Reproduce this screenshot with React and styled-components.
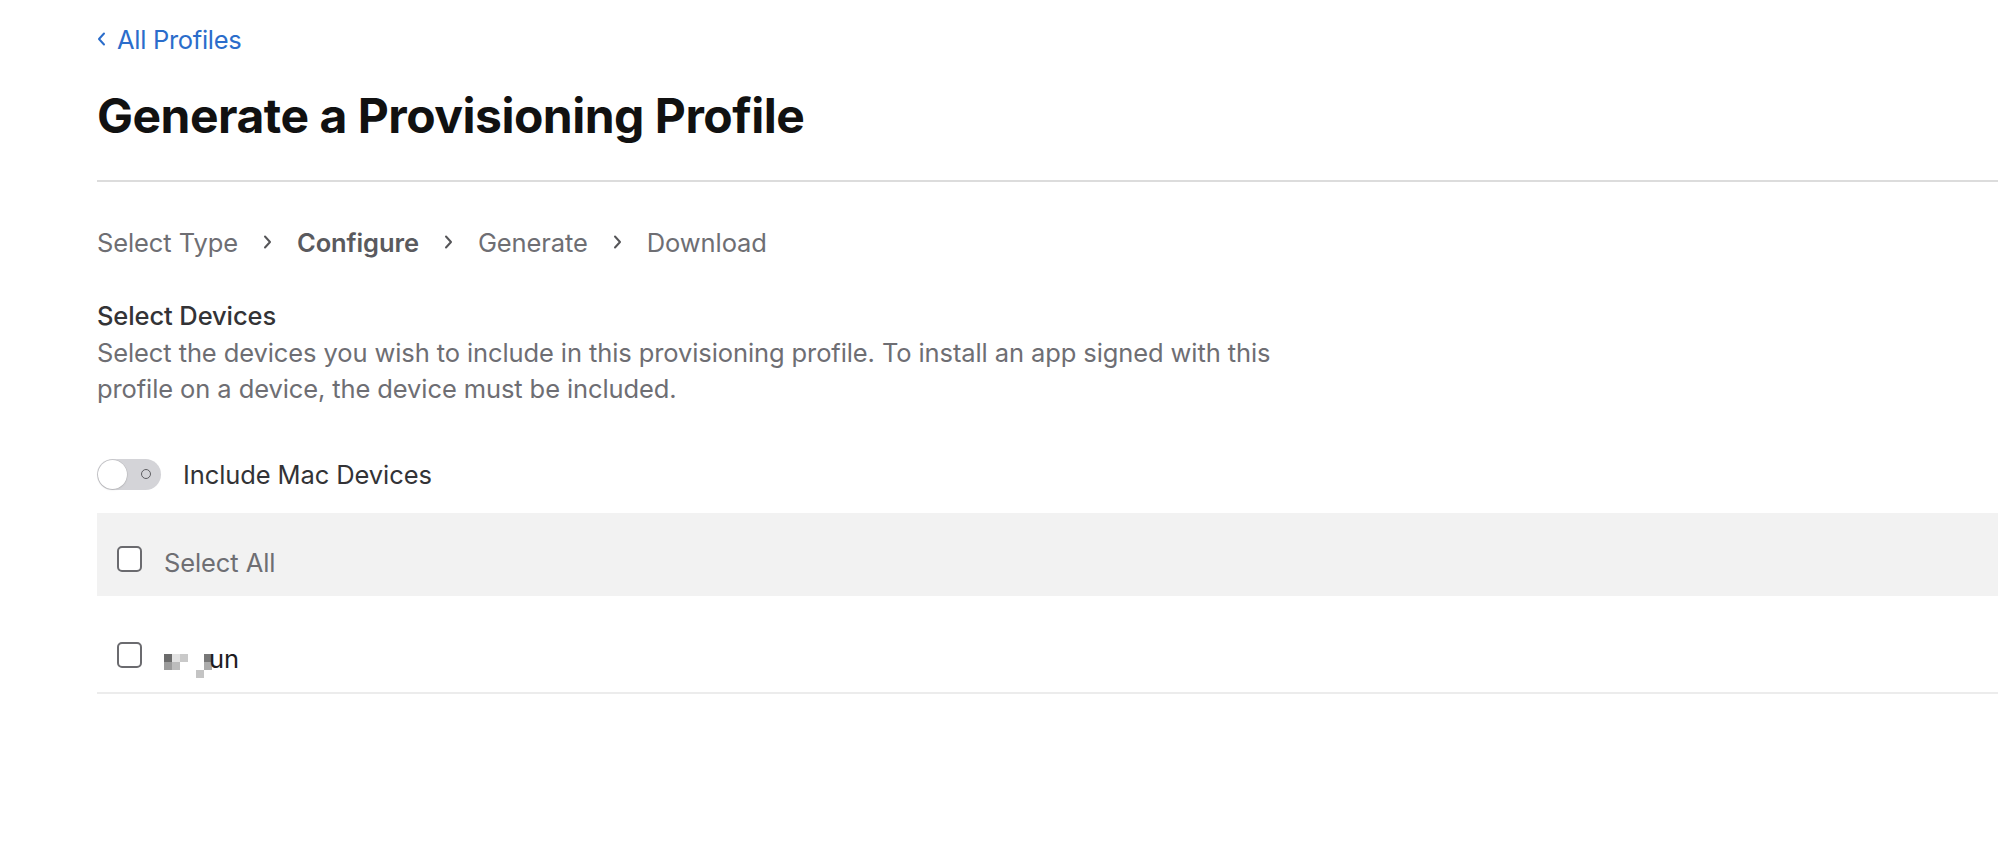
import React, { useState } from "react";
import styled, { createGlobalStyle } from "styled-components";

const GlobalStyle = createGlobalStyle`
  html, body {
    margin: 0;
    padding: 0;
    background: #ffffff;
  }
  body {
    font-family: Inter, "Noto Sans", "Liberation Sans", sans-serif;
    -webkit-font-smoothing: antialiased;
    overflow: hidden;
  }
`;

const greyText = "#6e6e73";
const linkColor = "#2b6dcb";

const Page = styled.div`
  padding: 24px 0 0 97px;
  display: flex;
  flex-direction: column;
  min-height: 100vh;
  box-sizing: border-box;
`;

const BackLink = styled.a`
  display: inline-flex;
  align-items: center;
  gap: 11px;
  align-self: flex-start;
  height: 30px;
  font-size: 25.5px;
  letter-spacing: -0.3px;
  color: ${linkColor};
  text-decoration: none;
  cursor: pointer;
`;

const Header = styled.header`
  border-bottom: 2px solid #dcdcdc;
  padding: 33px 0 35px;
`;

const Title = styled.h1`
  margin: 0;
  font-size: 48px;
  line-height: 58px;
  font-weight: 700;
  letter-spacing: -0.5px;
  color: #111111;
`;

const Steps = styled.nav`
  display: flex;
  align-items: center;
  gap: 25px;
  margin-top: 44px;
  height: 32px;
`;

const Step = styled.span`
  font-size: 25.5px;
  letter-spacing: -0.1px;
  color: ${(p) => (p.$active ? "#5a5a5e" : greyText)};
  font-weight: ${(p) => (p.$active ? 600 : 400)};
`;

const SectionTitle = styled.h2`
  margin: 40px 0 0;
  font-size: 25.5px;
  line-height: 36px;
  font-weight: 500;
  letter-spacing: -0.1px;
  color: #333336;
`;

const Description = styled.p`
  margin: 1px 0 0;
  max-width: 1200px;
  font-size: 25.5px;
  line-height: 36px;
  letter-spacing: -0.1px;
  color: ${greyText};
`;

const ToggleRow = styled.label`
  display: flex;
  align-items: center;
  gap: 22px;
  margin-top: 51px;
  height: 32px;
  font-size: 25.5px;
  letter-spacing: -0.1px;
  color: #333336;
  cursor: pointer;
`;

const Track = styled.span`
  position: relative;
  width: 64px;
  height: 31px;
  border-radius: 16px;
  background: ${(p) => (p.$on ? "#34c759" : "#d4d4d8")};
  flex-shrink: 0;
  transition: background 0.2s;
`;

const Knob = styled.span`
  position: absolute;
  top: 1px;
  left: ${(p) => (p.$on ? "34px" : "1px")};
  width: 29px;
  height: 29px;
  border-radius: 50%;
  background: #ffffff;
  box-shadow: 0 0 0 0.5px rgba(0, 0, 0, 0.12), 0 1px 2px rgba(0, 0, 0, 0.1);
  transition: left 0.2s;
`;

const OffMark = styled.span`
  position: absolute;
  top: 10px;
  right: 10px;
  width: 8px;
  height: 8px;
  border-radius: 50%;
  border: 1.6px solid #5e5e62;
`;

const DeviceTable = styled.div`
  margin-top: 23px;
  display: flex;
  flex-direction: column;
`;

const Row = styled.div`
  display: flex;
  align-items: center;
  gap: 22px;
  box-sizing: border-box;
  height: ${(p) => (p.$head ? "83px" : "98px")};
  padding: ${(p) => (p.$head ? "9px 0 0 20px" : "22px 0 0 20px")};
  background: ${(p) => (p.$head ? "#f2f2f2" : "#ffffff")};
  border-bottom: ${(p) => (p.$head ? "none" : "2px solid #ececec")};
`;

const Box = styled.span`
  width: 21px;
  height: 22px;
  border: 2px solid #6b6b6f;
  border-radius: 5px;
  background: #ffffff;
  flex-shrink: 0;
`;

const RowLabel = styled.span`
  display: flex;
  align-items: center;
  font-size: 25.5px;
  line-height: 30px;
  letter-spacing: -0.1px;
  color: ${(p) => (p.$muted ? greyText : "#1d1d1f")};
  margin-top: 8px;
`;

const Mosaic = styled.span`
  display: grid;
  grid-template-columns: repeat(6, 8px);
  grid-auto-rows: 8px;
  margin-top: 14px;
  margin-right: -3px;
`;

const Cell = styled.span`
  background: ${(p) => p.$c || "transparent"};
`;

const Chevron = ({ left }) => (
  <svg width="9" height="14" viewBox="0 0 9 14" fill="none">
    <path
      d={left ? "M7 1.5 L2 7 L7 12.5" : "M2 1.5 L7 7 L2 12.5"}
      stroke={left ? linkColor : "#555558"}
      strokeWidth="2"
      strokeLinecap="round"
      strokeLinejoin="round"
    />
  </svg>
);

const mosaicCells = [
  "#6b6b6b", "#e2e2e2", "#c9c9c9", null, null, "#777777",
  "#9b9b9b", "#bcbcbc", null, null, null, "#ababab",
  null, null, null, null, "#c4c4c4", null,
];

const steps = ["Select Type", "Configure", "Generate", "Download"];

export default function App() {
  const [includeMac, setIncludeMac] = useState(false);

  return (
    <>
      <GlobalStyle />
      <Page>
        <BackLink>
          <Chevron left />
          All Profiles
        </BackLink>
        <Header>
          <Title>Generate a Provisioning Profile</Title>
        </Header>

        <Steps>
          {steps.map((s, i) => (
            <React.Fragment key={s}>
              {i > 0 && <Chevron />}
              <Step $active={s === "Configure"}>{s}</Step>
            </React.Fragment>
          ))}
        </Steps>

        <SectionTitle>Select Devices</SectionTitle>
        <Description>
          Select the devices you wish to include in this provisioning profile.
          To install an app signed with this profile on a device, the device
          must be included.
        </Description>

        <ToggleRow onClick={() => setIncludeMac(!includeMac)}>
          <Track $on={includeMac}>
            {!includeMac && <OffMark />}
            <Knob $on={includeMac} />
          </Track>
          Include Mac Devices
        </ToggleRow>

        <DeviceTable>
          <Row $head>
            <Box />
            <RowLabel $muted>Select All</RowLabel>
          </Row>
          <Row>
            <Box />
            <RowLabel>
              <Mosaic>
                {mosaicCells.map((c, i) => (
                  <Cell key={i} $c={c} />
                ))}
              </Mosaic>
              un
            </RowLabel>
          </Row>
        </DeviceTable>
      </Page>
    </>
  );
}
